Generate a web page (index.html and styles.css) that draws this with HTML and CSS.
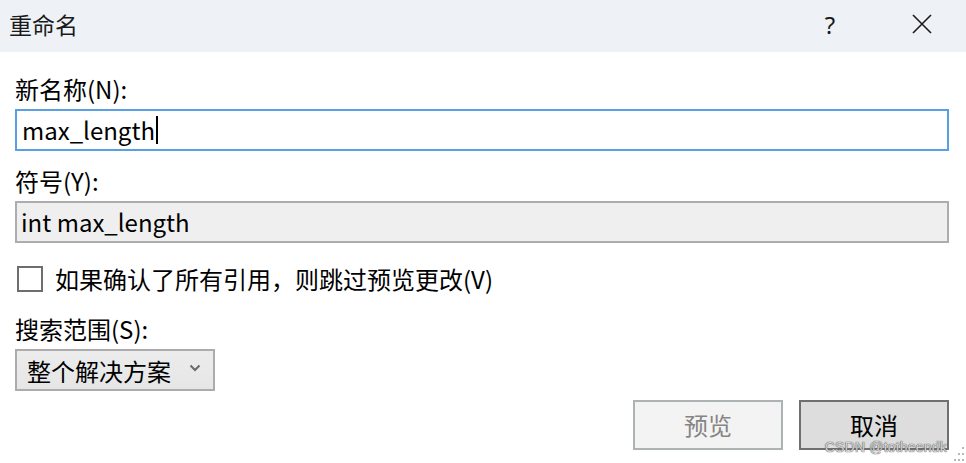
FILE: index.html
```html
<!DOCTYPE html>
<html lang="zh-CN">
<head>
<meta charset="utf-8">
<title>重命名</title>
<link rel="stylesheet" href="styles.css">
</head>
<body>
<div class="dialog">
  <header class="titlebar">
    <span class="title">重命名</span>
    <div class="title-actions">
      <span class="help">?</span>
      <span class="close">
        <svg width="20" height="20" viewBox="0 0 20 20"><path d="M1 1 L19 19 M19 1 L1 19" stroke="#1a1a1a" stroke-width="1.6" fill="none"/></svg>
      </span>
    </div>
  </header>
  <main class="content">
    <div class="label first">新名称(N):</div>
    <div class="field focused">max_length<span class="caret"></span></div>
    <div class="label">符号(Y):</div>
    <div class="field readonly">int max_length</div>
    <div class="check-row">
      <span class="checkbox"></span>
      <span class="check-text">如果确认了所有引用，则跳过预览更改(V)</span>
    </div>
    <div class="label scope">搜索范围(S):</div>
    <div class="select">
      <span>整个解决方案</span>
      <svg class="chev" width="12" height="8" viewBox="0 0 12 8"><path d="M1.5 1.5 L6 6 L10.5 1.5" stroke="#6a6a6a" stroke-width="2" fill="none"/></svg>
    </div>
    <div class="buttons">
      <div class="btn disabled">预览</div>
      <div class="btn primary">取消</div>
    </div>
  </main>
  <div class="watermark">CSDN @totheendk</div>
  <svg class="grip" width="14" height="18" viewBox="0 0 14 18"><g fill="#b8b8b8"><rect x="10" y="2" width="2" height="2"/><rect x="6" y="8" width="2" height="2"/><rect x="10" y="8" width="2" height="2"/><rect x="2" y="14" width="2" height="2"/><rect x="6" y="14" width="2" height="2"/><rect x="10" y="14" width="2" height="2"/></g></svg>
</div>
</body>
</html>
```
FILE: styles.css
```css
html, body {
  margin: 0;
  padding: 0;
  background: #ffffff;
}
body {
  font-family: "Noto Sans CJK SC", "Noto Sans", sans-serif;
  font-size: 24px;
  color: #000;
}
.dialog {
  position: relative;
  width: 966px;
  height: 463px;
  overflow: hidden;
}
.titlebar {
  height: 52px;
  background: #eef2f7;
  display: flex;
  align-items: center;
  justify-content: space-between;
  padding-left: 9px;
}
.title {
  font-size: 23px;
  color: #1a1a1a;
  line-height: 1;
  margin-top: -4px;
}
.title-actions {
  display: flex;
  align-items: center;
  margin-top: -4px;
}
.help {
  font-family: "Noto Sans", sans-serif;
  font-size: 24px;
  color: #1a1a1a;
  width: 20px;
  text-align: center;
  margin-right: 72px;
}
.close {
  display: flex;
  margin-right: 34px;
}
.content {
  display: flex;
  flex-direction: column;
  padding: 0 17px 0 15px;
}
.label {
  line-height: 30px;
  height: 30px;
  margin-top: 15px;
  margin-bottom: 5px;
}
.label.first {
  margin-top: 22px;
}
.field {
  height: 42px;
  box-sizing: border-box;
  border: 2px solid #59a0e2;
  padding: 0 5px;
  line-height: 38px;
  display: flex;
  align-items: center;
}
.caret {
  display: inline-block;
  width: 2px;
  height: 28px;
  background: #000;
  margin-left: 1px;
}
.field.readonly {
  border-color: #acacb1;
  background: #efefef;
  padding-left: 4px;
}
.check-row {
  display: flex;
  align-items: center;
  margin-top: 23px;
  height: 26px;
}
.checkbox {
  width: 26px;
  height: 26px;
  box-sizing: border-box;
  border: 2px solid #6e6e6e;
  background: #fff;
  margin-left: 2px;
  margin-right: 12px;
}
.check-text {
  line-height: 26px;
}
.label.scope {
  margin-top: 22px;
}
.select {
  width: 200px;
  height: 42px;
  box-sizing: border-box;
  border: 2px solid #acacac;
  background: linear-gradient(#ececec, #e6e6e6);
  display: flex;
  align-items: center;
  justify-content: space-between;
  padding: 0 12px 0 10px;
}
.chev {
  margin-top: -4px;
}
.buttons {
  display: flex;
  justify-content: flex-end;
  gap: 16px;
  margin-top: 9px;
}
.btn {
  width: 150px;
  height: 50px;
  box-sizing: border-box;
  display: flex;
  align-items: center;
  justify-content: center;
  line-height: 26px;
}
.btn.disabled {
  border: 2px solid #adb2b5;
  background: #f3f3f3;
  color: #858585;
}
.btn.primary {
  border: 2px solid #707070;
  background: #dddddd;
  color: #000;
}
.watermark {
  position: absolute;
  right: 19px;
  bottom: 10px;
  font-family: "Liberation Sans", sans-serif;
  font-size: 14px;
  line-height: 12px;
  color: #d4d4d4;
  text-shadow: 0 0 1px #555, 0 0 1px #555;
  letter-spacing: 0.2px;
}
.grip {
  position: absolute;
  right: 0;
  bottom: 0;
}
```
